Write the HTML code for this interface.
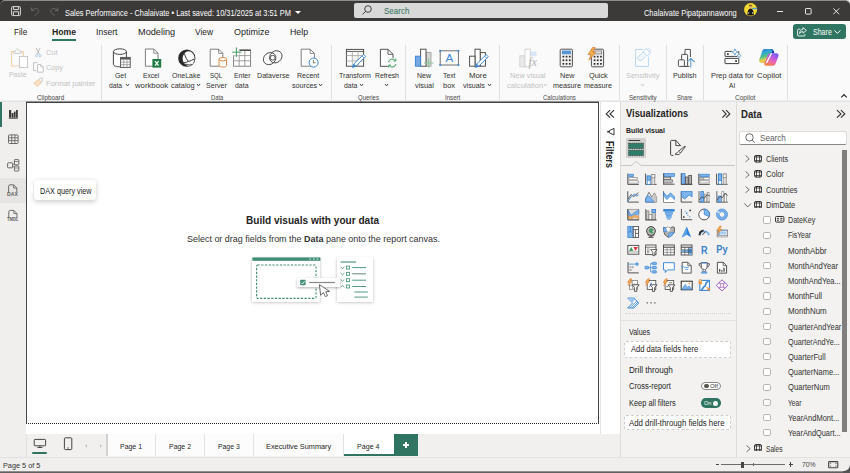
<!DOCTYPE html>
<html><head><meta charset="utf-8"><title>Sales Performance</title>
<style>
*{box-sizing:border-box;margin:0;padding:0}
html,body{width:850px;height:473px;overflow:hidden;background:#f3f2f1;font-family:"Liberation Sans",sans-serif;color:#252423}
.a{position:absolute}
.t{position:absolute;white-space:nowrap;transform-origin:0 50%;display:block}
svg{position:absolute;overflow:visible}

</style></head><body>
<div class="a" style="left:0px;top:0px;width:850px;height:21px;background:#e9e9e9;"></div>
<div class="a" style="left:0px;top:0px;width:12px;height:12px;background:#262626;"></div>
<div class="a" style="left:0px;top:0px;width:850px;height:20.9px;background:#3b3a39;border-radius:5px 5px 0 0;border-top:1px solid #8e8e8e"></div>
<div class="a" style="left:0px;top:20.9px;width:850px;height:79.6px;background:#fafafa;"></div>
<div class="a" style="left:0px;top:100.2px;width:850px;height:1.8px;background:linear-gradient(#f4f4f4,#dcdcdc);"></div>
<div class="a" style="left:0px;top:102px;width:26px;height:355px;background:#f0efee;"></div>
<div class="a" style="left:26px;top:102px;width:594px;height:332px;background:#fff;"></div>
<div class="a" style="left:26px;top:101px;width:573px;height:1.2px;background:#949494;"></div>
<div class="a" style="left:26px;top:101.8px;width:573px;height:322.2px;background:#fff;border:1px solid #454545;border-bottom:1px dotted #222"></div>
<div class="a" style="left:599.5px;top:102px;width:1px;height:332px;background:#e4e3e2;"></div>
<div class="a" style="left:25.5px;top:434px;width:594.5px;height:23px;background:#f1f0ef;border-left:1px solid #e2e1e0"></div>
<div class="a" style="left:620px;top:102px;width:116px;height:355px;background:#f3f2f1;border-left:1px solid #dddcdb"></div>
<div class="a" style="left:736px;top:102px;width:114px;height:355px;background:#f3f2f1;border-left:1px solid #dddcdb"></div>
<div class="a" style="left:0px;top:456.5px;width:850px;height:14.5px;background:#f0efee;border-top:1px solid #e3e2e1"></div>
<div class="a" style="left:0px;top:470.6px;width:850px;height:2.4px;background:linear-gradient(#a5a5a5,#4a4a4a);"></div>
<div class="a" style="left:295.4px;top:10.6px;border-left:3.1px solid transparent;border-right:3.1px solid transparent;border-top:3.4px solid #fff"></div>
<div class="a" style="left:354.2px;top:2.8px;width:254px;height:15.1px;background:#d9d9d9;border-radius:2px"></div>
<div class="a" style="left:51.6px;top:39.2px;width:24px;height:1.9px;background:#2f7562;"></div>
<div class="a" style="left:793px;top:24px;width:53px;height:15px;background:#2f7562;border-radius:3px"></div>
<div class="a" style="left:101.3px;top:45px;width:1px;height:54.8px;background:#e0e0e0;"></div>
<div class="a" style="left:331.1px;top:45px;width:1px;height:54.8px;background:#e0e0e0;"></div>
<div class="a" style="left:404.9px;top:45px;width:1px;height:54.8px;background:#e0e0e0;"></div>
<div class="a" style="left:499.1px;top:45px;width:1px;height:54.8px;background:#e0e0e0;"></div>
<div class="a" style="left:618.7px;top:45px;width:1px;height:54.8px;background:#e0e0e0;"></div>
<div class="a" style="left:665.8px;top:45px;width:1px;height:54.8px;background:#e0e0e0;"></div>
<div class="a" style="left:703.1px;top:45px;width:1px;height:54.8px;background:#e0e0e0;"></div>
<div class="a" style="left:786.9px;top:45px;width:1px;height:54.8px;background:#e0e0e0;"></div>
<svg style="left:125.85000000000001px;top:84.45px;" width="3.1" height="1.9" viewBox="0 0 3.1 1.9" fill="none"><path d="M0 0 L1.55 1.9 L3.1 0" stroke="#3b3a39" stroke-width="0.95"/></svg>
<svg style="left:197.04999999999998px;top:84.45px;" width="3.1" height="1.9" viewBox="0 0 3.1 1.9" fill="none"><path d="M0 0 L1.55 1.9 L3.1 0" stroke="#3b3a39" stroke-width="0.95"/></svg>
<svg style="left:319.05px;top:84.45px;" width="3.1" height="1.9" viewBox="0 0 3.1 1.9" fill="none"><path d="M0 0 L1.55 1.9 L3.1 0" stroke="#3b3a39" stroke-width="0.95"/></svg>
<svg style="left:360.45px;top:84.45px;" width="3.1" height="1.9" viewBox="0 0 3.1 1.9" fill="none"><path d="M0 0 L1.55 1.9 L3.1 0" stroke="#3b3a39" stroke-width="0.95"/></svg>
<svg style="left:385.15px;top:84.35px;" width="3.1" height="1.9" viewBox="0 0 3.1 1.9" fill="none"><path d="M0 0 L1.55 1.9 L3.1 0" stroke="#3b3a39" stroke-width="0.95"/></svg>
<svg style="left:487.84999999999997px;top:84.45px;" width="3.1" height="1.9" viewBox="0 0 3.1 1.9" fill="none"><path d="M0 0 L1.55 1.9 L3.1 0" stroke="#3b3a39" stroke-width="0.95"/></svg>
<svg style="left:544.25px;top:84.45px;" width="3.1" height="1.9" viewBox="0 0 3.1 1.9" fill="none"><path d="M0 0 L1.55 1.9 L3.1 0" stroke="#c3c3c3" stroke-width="0.95"/></svg>
<svg style="left:640.6500000000001px;top:84.35px;" width="3.1" height="1.9" viewBox="0 0 3.1 1.9" fill="none"><path d="M0 0 L1.55 1.9 L3.1 0" stroke="#c3c3c3" stroke-width="0.95"/></svg>
<svg style="left:841px;top:93.7px;" width="6" height="3.6" viewBox="0 0 6 3.6" fill="none"><path d="M0.3 3.3 L3 0.5 L5.7 3.3" stroke="#222" stroke-width="1.1"/></svg>
<div class="a" style="left:0px;top:101.8px;width:2px;height:25px;background:#2f7562;"></div>
<div class="a" style="left:0px;top:177.8px;width:25.5px;height:25.2px;background:#e6e5e4;"></div>
<div class="a" style="left:33.5px;top:180px;width:62.9px;height:20px;background:#fff;border-radius:3px;box-shadow:0 1.5px 5px rgba(0,0,0,.2)"></div>
<div class="a" style="left:28.1px;top:185.2px;border-top:4.7px solid transparent;border-bottom:4.7px solid transparent;border-right:5.6px solid #fff"></div>
<div class="a" style="left:107.4px;top:434px;width:286.6px;height:22.4px;background:#fcfcfc;"></div>
<div class="a" style="left:106.4px;top:434px;width:1.6px;height:22.4px;background:#d2d1d0;"></div>
<div class="a" style="left:155.1px;top:434px;width:1.2px;height:22.4px;background:#e3e2e1;"></div>
<div class="a" style="left:204.0px;top:434px;width:1.2px;height:22.4px;background:#e3e2e1;"></div>
<div class="a" style="left:253.0px;top:434px;width:1.2px;height:22.4px;background:#e3e2e1;"></div>
<div class="a" style="left:343.2px;top:434px;width:1.2px;height:22.4px;background:#e3e2e1;"></div>
<div class="a" style="left:344.2px;top:434px;width:49.6px;height:22.4px;background:#fff;"></div>
<div class="a" style="left:344.2px;top:454.3px;width:49.6px;height:2.1px;background:#2f7562;"></div>
<div class="a" style="left:394.1px;top:434.2px;width:24.1px;height:22.2px;background:#2f7562;"></div>
<div class="a" style="left:402.6px;top:444.4px;width:6.6px;height:1.5px;background:#fff;"></div>
<div class="a" style="left:405.15px;top:441.9px;width:1.5px;height:6.6px;background:#fff;"></div>
<div class="a" style="left:32.1px;top:451.9px;width:15.4px;height:2px;background:#2f7562;border-radius:1px"></div>
<div class="a" style="left:85.4px;top:443.6px;border-top:2.1px solid transparent;border-bottom:2.1px solid transparent;border-right:2.8px solid #c8c6c4"></div>
<div class="a" style="left:99.9px;top:443.6px;border-top:2.1px solid transparent;border-bottom:2.1px solid transparent;border-left:2.8px solid #c8c6c4"></div>
<div class="a" style="left:716.4px;top:464.1px;width:2.2px;height:0.9px;background:#444;"></div>
<div class="a" style="left:721px;top:464.1px;width:63.8px;height:0.8px;background:#6b6b6b;"></div>
<div class="a" style="left:740.8px;top:461.5px;width:2.8px;height:6.2px;background:#484644;"></div>
<div class="a" style="left:752.6px;top:463px;width:0.8px;height:3px;background:#6b6b6b;"></div>
<div class="a" style="left:788.6px;top:464.1px;width:4.4px;height:0.9px;background:#444;"></div>
<div class="a" style="left:790.35px;top:462.3px;width:0.9px;height:4.5px;background:#444;"></div>
<svg style="left:828.3px;top:461.2px;" width="10.4" height="7.4" viewBox="0 0 10.4 7.4" fill="none"><rect x="0.6" y="0.6" width="9.2" height="6.2" rx="0.8" stroke="#484644" stroke-width="1.1"/><path d="M2.2 3V2.2H3.2M7.2 2.2H8.2V3M8.2 4.4V5.2H7.2M3.2 5.2H2.2V4.4" stroke="#484644" stroke-width="0.7"/></svg>
<svg style="left:843px;top:464px" width="7" height="9" viewBox="0 0 7 9"><path d="M7 0V9H0V7C4 7 7 4.5 7 0Z" fill="#555"/></svg>
<span class="t" style="left:610.3px;top:141.1px;font-size:10.8px;line-height:10.8px;font-weight:bold;transform-origin:0 0;transform:rotate(90deg) translateY(-50%) scaleX(0.83);">Filters</span>
<div class="a" style="left:626.1px;top:138px;width:19.8px;height:19.5px;background:#d2d1d0;border-radius:1px"></div>
<div class="a" style="left:621px;top:164.6px;width:114px;height:1px;background:#c8c6c4;"></div>
<svg style="left:630.6px;top:160.9px" width="10.6" height="4.9" viewBox="0 0 10.6 4.9"><path d="M0 4.9 L5.3 0.5 L10.6 4.9" fill="#f3f2f1" stroke="#c8c6c4" stroke-width="0.9"/></svg>
<div class="a" style="left:624.5px;top:313.4px;width:106.8px;height:0px;background:transparent;border-top:1px dotted #d4d2d0"></div>
<div class="a" style="left:621px;top:320px;width:114.5px;height:1px;background:#e3e1df;"></div>
<div class="a" style="left:623.6px;top:340.7px;width:107.8px;height:17.1px;background:#fff;border:1px dashed #d0cecc;border-radius:2px"></div>
<div class="a" style="left:700.7px;top:381.6px;width:20.2px;height:8.9px;background:#fff;border:1px solid #8a8886;border-radius:4.5px"></div>
<div class="a" style="left:704.1px;top:383.8px;width:4.6px;height:4.6px;background:#55534f;border-radius:50%"></div>
<div class="a" style="left:700.7px;top:398.3px;width:20.2px;height:9.4px;background:#2f7562;border-radius:4.7px"></div>
<div class="a" style="left:712.8px;top:400.5px;width:5px;height:5px;background:#fff;border-radius:50%"></div>
<div class="a" style="left:623.6px;top:414.5px;width:107.8px;height:15.2px;background:#fff;border:1px dashed #d0cecc;border-radius:2px"></div>
<div class="a" style="left:739px;top:130.8px;width:108.2px;height:14px;background:#fff;border:1px solid #dcdbda;border-bottom:1px solid #8a8886;border-radius:2.5px"></div>
<svg style="left:745.4px;top:132.8px;" width="10.6" height="10.2" viewBox="0 0 10.6 10.2" fill="none"><circle cx="4.5" cy="4.4" r="3.7" stroke="#605e5c" stroke-width="0.9"/><path d="M7.2 7.2L9.8 9.6" stroke="#605e5c" stroke-width="0.9"/></svg>
<div class="a" style="left:842.2px;top:150.2px;width:5.2px;height:281.4px;background:#7f7e7d;"></div>
<svg style="left:745.4px;top:155.3px;" width="4.8" height="7.4" viewBox="0 0 4.8 7.4" fill="none"><path d="M0.5 0.5 L4.2 3.7 L0.5 6.9" stroke="#605e5c" stroke-width="0.9"/></svg>
<svg style="left:754px;top:155.2px;overflow:hidden;" width="8.1" height="7.6" viewBox="0 0 8.1 7.6" fill="none"><rect x="0.5" y="0.5" width="7.1" height="6.6" rx="1.5" stroke="#2b2a29" stroke-width="0.95"/><path d="M0.5 2H7.6M0.5 5.6H7.6M2.5 0.5V7.1M5.6 0.5V7.1" stroke="#2b2a29" stroke-width="0.8"/></svg>
<svg style="left:745.4px;top:170.5px;" width="4.8" height="7.4" viewBox="0 0 4.8 7.4" fill="none"><path d="M0.5 0.5 L4.2 3.7 L0.5 6.9" stroke="#605e5c" stroke-width="0.9"/></svg>
<svg style="left:754px;top:170.39999999999998px;overflow:hidden;" width="8.1" height="7.6" viewBox="0 0 8.1 7.6" fill="none"><rect x="0.5" y="0.5" width="7.1" height="6.6" rx="1.5" stroke="#2b2a29" stroke-width="0.95"/><path d="M0.5 2H7.6M0.5 5.6H7.6M2.5 0.5V7.1M5.6 0.5V7.1" stroke="#2b2a29" stroke-width="0.8"/></svg>
<svg style="left:745.4px;top:185.70000000000002px;" width="4.8" height="7.4" viewBox="0 0 4.8 7.4" fill="none"><path d="M0.5 0.5 L4.2 3.7 L0.5 6.9" stroke="#605e5c" stroke-width="0.9"/></svg>
<svg style="left:754px;top:185.6px;overflow:hidden;" width="8.1" height="7.6" viewBox="0 0 8.1 7.6" fill="none"><rect x="0.5" y="0.5" width="7.1" height="6.6" rx="1.5" stroke="#2b2a29" stroke-width="0.95"/><path d="M0.5 2H7.6M0.5 5.6H7.6M2.5 0.5V7.1M5.6 0.5V7.1" stroke="#2b2a29" stroke-width="0.8"/></svg>
<svg style="left:744.0px;top:202.6px;" width="7.4" height="4.6" viewBox="0 0 7.4 4.6" fill="none"><path d="M0.5 0.5 L3.7 4 L6.9 0.5" stroke="#605e5c" stroke-width="0.9"/></svg>
<svg style="left:754px;top:200.79999999999998px;overflow:hidden;" width="8.1" height="7.6" viewBox="0 0 8.1 7.6" fill="none"><rect x="0.5" y="0.5" width="7.1" height="6.6" rx="1.5" stroke="#2b2a29" stroke-width="0.95"/><path d="M0.5 2H7.6M0.5 5.6H7.6M2.5 0.5V7.1M5.6 0.5V7.1" stroke="#2b2a29" stroke-width="0.8"/></svg>
<div class="a" style="left:763.4px;top:216.3px;width:7.4px;height:7.4px;background:#fff;border:1px solid #b6b4b2;border-radius:1.8px"></div>
<div class="a" style="left:763.4px;top:231.5px;width:7.4px;height:7.4px;background:#fff;border:1px solid #b6b4b2;border-radius:1.8px"></div>
<div class="a" style="left:763.4px;top:246.7px;width:7.4px;height:7.4px;background:#fff;border:1px solid #b6b4b2;border-radius:1.8px"></div>
<div class="a" style="left:763.4px;top:261.9px;width:7.4px;height:7.4px;background:#fff;border:1px solid #b6b4b2;border-radius:1.8px"></div>
<div class="a" style="left:763.4px;top:277.1px;width:7.4px;height:7.4px;background:#fff;border:1px solid #b6b4b2;border-radius:1.8px"></div>
<div class="a" style="left:763.4px;top:292.3px;width:7.4px;height:7.4px;background:#fff;border:1px solid #b6b4b2;border-radius:1.8px"></div>
<div class="a" style="left:763.4px;top:307.5px;width:7.4px;height:7.4px;background:#fff;border:1px solid #b6b4b2;border-radius:1.8px"></div>
<div class="a" style="left:763.4px;top:322.7px;width:7.4px;height:7.4px;background:#fff;border:1px solid #b6b4b2;border-radius:1.8px"></div>
<div class="a" style="left:763.4px;top:337.9px;width:7.4px;height:7.4px;background:#fff;border:1px solid #b6b4b2;border-radius:1.8px"></div>
<div class="a" style="left:763.4px;top:353.1px;width:7.4px;height:7.4px;background:#fff;border:1px solid #b6b4b2;border-radius:1.8px"></div>
<div class="a" style="left:763.4px;top:368.3px;width:7.4px;height:7.4px;background:#fff;border:1px solid #b6b4b2;border-radius:1.8px"></div>
<div class="a" style="left:763.4px;top:383.5px;width:7.4px;height:7.4px;background:#fff;border:1px solid #b6b4b2;border-radius:1.8px"></div>
<div class="a" style="left:763.4px;top:398.7px;width:7.4px;height:7.4px;background:#fff;border:1px solid #b6b4b2;border-radius:1.8px"></div>
<div class="a" style="left:763.4px;top:413.9px;width:7.4px;height:7.4px;background:#fff;border:1px solid #b6b4b2;border-radius:1.8px"></div>
<div class="a" style="left:763.4px;top:429.1px;width:7.4px;height:7.4px;background:#fff;border:1px solid #b6b4b2;border-radius:1.8px"></div>
<svg style="left:775.2px;top:216.3px;" width="9.4" height="6.6" viewBox="0 0 9.4 6.6" fill="none"><rect x="0.5" y="0.5" width="8.4" height="5.6" rx="1" stroke="#252423" stroke-width="0.95"/><path d="M1.9 2.4H4M1.9 4.2H4M5.2 2.4H7.4M5.2 4.2H7.4" stroke="#252423" stroke-width="0.9"/></svg>
<svg style="left:746px;top:444.6px;" width="4.8" height="7.4" viewBox="0 0 4.8 7.4" fill="none"><path d="M0.5 0.5 L4.2 3.7 L0.5 6.9" stroke="#605e5c" stroke-width="0.9"/></svg>
<svg style="left:754px;top:444.3px;overflow:hidden;" width="8.1" height="7.0" viewBox="0 0 8.1 7.0" fill="none"><rect x="0.5" y="0.5" width="7.1" height="6.6" rx="1.5" stroke="#2b2a29" stroke-width="0.95"/><path d="M0.5 2H7.6M0.5 5.6H7.6M2.5 0.5V7.1M5.6 0.5V7.1" stroke="#2b2a29" stroke-width="0.8"/></svg>
<svg style="left:10.7px;top:5.8px;" width="10" height="10.2" viewBox="0 0 10 10.2" fill="none"><path d="M0.6 1.6a1 1 0 0 1 1-1H8.4a1 1 0 0 1 1 1V8.6a1 1 0 0 1-1 1H1.6a1 1 0 0 1-1-1Z" stroke="#dcdcdc" stroke-width="1"/><path d="M2.6 0.8V3.6H7.4V0.8M2.4 9.4V5.8H7.6V9.4" stroke="#dcdcdc" stroke-width="1"/></svg>
<svg style="left:30.5px;top:7px;" width="8.4" height="9.2" viewBox="0 0 8.4 9.2" fill="none"><path d="M0.6 0.6V3.6H3.6" stroke="#6e6d6c" stroke-width="0.9"/><path d="M0.8 3.4C3 1 6.4 0.8 7.5 3.2C8.4 5.4 5.6 7.2 3.6 9" stroke="#6e6d6c" stroke-width="0.9"/></svg>
<svg style="left:50.2px;top:7px;" width="8.4" height="9.2" viewBox="0 0 8.4 9.2" fill="none"><path d="M7.8 0.6V3.6H4.8" stroke="#6e6d6c" stroke-width="0.9"/><path d="M7.6 3.4C5.4 1 2 0.8 0.9 3.2C0 5.4 2.8 7.2 4.8 9" stroke="#6e6d6c" stroke-width="0.9"/></svg>
<svg style="left:362px;top:5.4px;" width="10" height="10" viewBox="0 0 10 10" fill="none"><circle cx="6" cy="4" r="3.3" stroke="#3a3a3a" stroke-width="0.95"/><path d="M3.6 6.4L0.6 9.4" stroke="#3a3a3a" stroke-width="0.95"/></svg>
<svg style="left:743.7px;top:2.8px;" width="13.2" height="13.2" viewBox="0 0 13.2 13.2" fill="none"><defs><clipPath id="avc"><circle cx="6.6" cy="6.6" r="6.55"/></clipPath></defs><circle cx="6.6" cy="6.6" r="6.55" fill="#f4d92f"/><g clip-path="url(#avc)"><path d="M4.8 2.9C4.8 1.5 8.2 1.5 8.2 2.9L7.8 3.6H5.2Z" fill="#6b4a1f"/><rect x="5.5" y="2.4" width="2" height="3.6" rx="0.9" fill="#d9a47e"/><path d="M3.4 12.6C3.4 7.4 4.6 5.8 6.5 5.8S9.8 7.4 9.8 12.6Z" fill="#17171a"/><rect x="8.3" y="4.8" width="4.6" height="1.5" fill="#4a9be8"/><rect x="3.8" y="9.4" width="1.4" height="1.2" fill="#e8d9c8"/><rect x="8" y="9.4" width="1.4" height="1.2" fill="#e8d9c8"/></g></svg>
<div class="a" style="left:777px;top:11px;width:6.4px;height:0.9px;background:#e8e8e8;"></div>
<svg style="left:804.7px;top:8.2px;" width="6.6" height="6.6" viewBox="0 0 6.6 6.6" fill="none"><rect x="0.5" y="0.5" width="5.6" height="5.6" rx="0.6" stroke="#f0f0f0" stroke-width="0.95"/></svg>
<svg style="left:832.6px;top:8.2px;" width="6.6" height="6.6" viewBox="0 0 6.6 6.6" fill="none"><path d="M0.4 0.4L6.2 6.2M6.2 0.4L0.4 6.2" stroke="#f0f0f0" stroke-width="0.95"/></svg>
<svg style="left:797px;top:26.6px;" width="10" height="9.6" viewBox="0 0 10 9.6" fill="none"><path d="M3.4 2.2H1.6a1 1 0 0 0-1 1V8a1 1 0 0 0 1 1H7a1 1 0 0 0 1-1V7.2" stroke="#fff" stroke-width="0.9"/><path d="M6 0.6L9.4 3.4L6 6.2V4.6C4.4 4.6 3.4 5.2 2.6 6.6C2.8 4 4 2.4 6 2.2Z" stroke="#fff" stroke-width="0.85" stroke-linejoin="round"/></svg>
<svg style="left:834.3px;top:29.6px;" width="6.8" height="4" viewBox="0 0 6.8 4" fill="none"><path d="M0.4 0.4L3.4 3.4L6.4 0.4" stroke="#fff" stroke-width="1"/></svg>
<div class="a" style="left:252.4px;top:257.4px;width:68px;height:44.6px;background:#fff;box-shadow:0 0.5px 3px rgba(0,0,0,.28)"></div>
<div class="a" style="left:336.7px;top:257px;width:36px;height:45px;background:#fff;box-shadow:0 0.5px 3px rgba(0,0,0,.28)"></div>
<svg style="left:0;top:0" width="850" height="473" viewBox="0 0 850 473" fill="none"><rect x="252.4" y="257.4" width="68" height="3.4" rx="0" stroke="none" fill="#3f8c76" stroke-width="1" /><rect x="309.4" y="258.5" width="1.6" height="1.2" rx="0" stroke="none" fill="#cfe5dd" stroke-width="1" /><rect x="313" y="258.5" width="1.6" height="1.2" rx="0" stroke="none" fill="#cfe5dd" stroke-width="1" /><rect x="316.6" y="258.5" width="1.6" height="1.2" rx="0" stroke="none" fill="#cfe5dd" stroke-width="1" /><rect x="256.6" y="265" width="59.4" height="33.4" rx="1" stroke="#3f8c76" fill="none" stroke-width="1.1" stroke-dasharray="2.2 1.5"/></svg>
<svg style="left:0;top:0" width="850" height="473" viewBox="0 0 850 473" fill="none"><path d="M340.6 262H356.1" stroke="#3f8c76" fill="none" stroke-width="1.1" /><path d="M340.6 266.8L342.5 268.6L344.4 266.8" stroke="#3f8c76" fill="none" stroke-width="0.8" /><rect x="346.4" y="266.1" width="3" height="3" rx="0" stroke="#3f8c76" fill="none" stroke-width="0.8" /><path d="M352.2 267.6H366" stroke="#3f8c76" fill="none" stroke-width="0.9" /><path d="M340.6 273.0L342.5 274.8L344.4 273.0" stroke="#3f8c76" fill="none" stroke-width="0.8" /><rect x="346.4" y="272.3" width="3" height="3" rx="0" stroke="#3f8c76" fill="none" stroke-width="0.8" /><path d="M352.2 273.8H366" stroke="#7d9a92" fill="none" stroke-width="1.2" /><path d="M340.6 279.4L342.5 281.2L344.4 279.4" stroke="#3f8c76" fill="none" stroke-width="0.8" /><rect x="346.4" y="278.7" width="3" height="3" rx="0" stroke="#3f8c76" fill="none" stroke-width="0.8" /><path d="M352.2 280.2H366" stroke="#3f8c76" fill="none" stroke-width="0.9" /><path d="M340.6 287.3L342.5 285.5L344.4 287.3" stroke="#3f8c76" fill="none" stroke-width="0.8" /><rect x="346.4" y="285.0" width="3" height="3" rx="0" stroke="#3f8c76" fill="none" stroke-width="0.8" /><path d="M352.2 286.5H366" stroke="#3f8c76" fill="none" stroke-width="0.9" /><path d="M354.4 292H367.8M354.4 297.1H367.8" stroke="#3f8c76" fill="none" stroke-width="0.9" /></svg>
<div class="a" style="left:296.8px;top:278.2px;width:43.2px;height:8.8px;background:#fff;box-shadow:0 0.5px 2.5px rgba(0,0,0,.3)"></div>
<svg style="left:0;top:0" width="850" height="473" viewBox="0 0 850 473" fill="none"><rect x="300.2" y="279.8" width="5.4" height="5.4" rx="0.6" stroke="none" fill="#3f8c76" stroke-width="1" /><path d="M301.4 282.8L302.6 284L304.6 281.2" stroke="#fff" fill="none" stroke-width="0.9" /><path d="M309.2 282.5H335" stroke="#8a8886" fill="none" stroke-width="1.2" /><path d="M319.4 284.6L320.6 295.2L323.4 292.6L325.4 296.6L327.6 295.6L325.6 291.8L329.6 291.4Z" stroke="#5a5958" fill="#fff" stroke-width="0.9" stroke-linejoin="round"/></svg>
<svg style="left:0;top:0" width="850" height="473" viewBox="0 0 850 473" fill="none"><g transform="translate(0 0)" ><path d="M14 51.6H11.6V66H19.2" stroke="#f3d2a6" fill="none" stroke-width="1.1" /><path d="M21 51.6H23.4V56" stroke="#f3d2a6" fill="none" stroke-width="1.1" /><path d="M13.8 53.4V51.2H15.6C15.8 49.6 16.6 48.9 17.5 48.9S19.2 49.6 19.4 51.2H21.2V53.4Z" stroke="#c6c6c6" fill="#fafafa" stroke-width="0.9" /><rect x="19.4" y="56.4" width="8.2" height="11.2" rx="0" stroke="#c2c2c2" fill="#fff" stroke-width="0.9" /></g>
<g transform="translate(0 0)" ><path d="M36.2 47.8L39.6 54.6M40.2 47.8L36.8 54.6" stroke="#b5b5b5" fill="none" stroke-width="0.9" /><circle cx="36.5" cy="55.6" r="1.1" stroke="#a9cdea" fill="none" stroke-width="0.9" /><circle cx="39.9" cy="55.6" r="1.1" stroke="#a9cdea" fill="none" stroke-width="0.9" /></g>
<g transform="translate(0 0)" ><path d="M37.4 62.6H33.5V70.6H36.4" stroke="#bdbdbd" fill="none" stroke-width="0.9" /><path d="M37.6 64.6H41L43.2 66.8V72.2H37.6Z" stroke="#bdbdbd" fill="#fff" stroke-width="0.9" /><path d="M40.8 64.8V67H43" stroke="#bdbdbd" fill="none" stroke-width="0.8" /></g>
<g transform="translate(0 0)" ><path d="M33.8 83.2L38.6 79.4L41.4 82.6L37.4 86.6Z" stroke="#f0c9a0" fill="#f8dfc4" stroke-width="0.9" /><path d="M38.8 79.4L40.8 77.8L42.8 80L41.2 82.2" stroke="#bdbdbd" fill="none" stroke-width="0.9" /><path d="M41.6 78.4L42.8 77.4" stroke="#bdbdbd" fill="none" stroke-width="0.9" /></g>
<g transform="translate(0 0)" ><path d="M113.4 51.6V64.2C113.4 65.8 116.4 66.8 119.9 66.8S126.4 65.8 126.4 64.2V51.6" stroke="#3b3a39" fill="#fcfcfc" stroke-width="0.95" /><ellipse cx="119.9" cy="51.6" rx="6.5" ry="2.8" stroke="#3b3a39" fill="#fcfcfc" stroke-width="0.95"/><rect x="120.6" y="57.4" width="9.6" height="10" rx="0" stroke="#4a4948" fill="#fff" stroke-width="0.9" /><rect x="120.6" y="57.4" width="9.6" height="2.2" rx="0" stroke="none" fill="#5a5958" stroke-width="1" /><path d="M120.6 62.1H130.2M120.6 64.7H130.2M123.8 59.6V67.4M127 59.6V67.4" stroke="#8a8886" fill="none" stroke-width="0.7" /></g>
<g transform="translate(0 0)" ><path d="M145.4 49H153.8L158.0 53.2V66.2H145.4Z" stroke="#7a7978" fill="#fff" stroke-width="0.95" /><path d="M153.8 49V53.2H158.0" stroke="#7a7978" fill="none" stroke-width="0.855" /><rect x="152.4" y="59" width="8.8" height="8.6" rx="0" stroke="none" fill="#1f7a45" stroke-width="1" /><path d="M155 61.2L158.6 65.6M158.6 61.2L155 65.6" stroke="#fff" fill="none" stroke-width="1.2" /></g>
<g transform="translate(0 0)" ><path fill-rule="evenodd" fill="#2b2a29" d="M178.2 58.2a8.6 8.6 0 1 0 17.2 0a8.6 8.6 0 1 0 -17.2 0ZM182.6 58.6a6 7.3 0 1 0 12 0a6 7.3 0 1 0 -12 0Z"/><path d="M184.4 53.4C185.4 57 186.6 59.6 188.4 61.4C190.6 61.2 192.4 59.4 194.6 59.2" stroke="#2b2a29" fill="none" stroke-width="0.9" /><path d="M181.4 62.8C184 63 186.4 62.4 188.4 61.4" stroke="#2b2a29" fill="none" stroke-width="0.9" /><path d="M182 64C185.4 63.4 188.6 65.8 192.4 64.6" stroke="#2b2a29" fill="none" stroke-width="0.8" /></g>
<g transform="translate(0 0)" ><path d="M210.2 49.2H218.6L222.79999999999998 53.400000000000006V66.2H210.2Z" stroke="#7a7978" fill="#fff" stroke-width="0.95" /><path d="M218.6 49.2V53.400000000000006H222.79999999999998" stroke="#7a7978" fill="none" stroke-width="0.855" /><path d="M219 59.4V65.4C219 66.4 220.6 67 222.8 67S226.6 66.4 226.6 65.4V59.4" stroke="#d8813a" fill="#fff" stroke-width="0.95" /><ellipse cx="222.8" cy="59.2" rx="3.8" ry="1.7" stroke="#d8813a" fill="#fff" stroke-width="0.95"/></g>
<g transform="translate(0 0)" ><rect x="233.6" y="50.2" width="17" height="16" rx="0" stroke="#7a7978" fill="#fff" stroke-width="0.9" /><path d="M236 50.2H250.6" stroke="#3b3a39" fill="none" stroke-width="1.3" /><path d="M233.6 55.6H250.6M233.6 60.8H250.6M239.2 51V66.2M244.8 51V66.2" stroke="#8a8886" fill="none" stroke-width="0.8" /><rect x="231.4" y="46.8" width="8" height="8.6" rx="0" stroke="none" fill="#f9f9f9" stroke-width="1" /><path d="M236.4 47.4V57M232.2 52.2H241.4" stroke="#3a9b5c" fill="none" stroke-width="0.95" /></g>
<g transform="translate(0 0)" ><ellipse cx="269.6" cy="58.6" rx="6.6" ry="5.7" transform="rotate(-40 269.6 58.6)" stroke="#4a4948" stroke-width="0.9"/><ellipse cx="275.8" cy="56.8" rx="6.6" ry="5.7" transform="rotate(-40 275.8 56.8)" stroke="#4a4948" stroke-width="0.9"/><circle cx="272.7" cy="57.7" r="2.4" stroke="#4a4948" fill="none" stroke-width="0.9" /></g>
<g transform="translate(0 0)" ><path d="M301.2 49.2H310.2L314.4 53.400000000000006V66.2H301.2Z" stroke="#7a7978" fill="#fff" stroke-width="0.95" /><path d="M310.2 49.2V53.400000000000006H314.4" stroke="#7a7978" fill="none" stroke-width="0.855" /><circle cx="313.6" cy="62.6" r="4.5" stroke="#3a86d4" fill="#fff" stroke-width="1" /><path d="M313.4 60V62.8H315.6" stroke="#605e5c" fill="none" stroke-width="0.85" /></g>
<g transform="translate(0 0)" ><rect x="346.4" y="49.4" width="17.2" height="16.8" rx="0" stroke="#4a4948" fill="#fff" stroke-width="0.95" /><path d="M346.4 51.4H363.6" stroke="#4a4948" fill="none" stroke-width="0.9" /><path d="M346.4 55.6H363.6M346.4 61H363.6M352.3 51.4V66.2M358 51.4V66.2" stroke="#a3a2a0" fill="none" stroke-width="0.8" /><path d="M355.78 66.34L353.66 64.22L363.54 54.34L365.66 56.46Z" stroke="#3a86d4" fill="#fff" stroke-width="0.95" stroke-linejoin="round"/><path d="M352.60 67.40L355.78 66.34L353.66 64.22Z" stroke="#3a86d4" fill="#3a86d4" stroke-width="0.95" stroke-linejoin="round"/><path d="M364.11 58.02L361.98 55.89" stroke="#3a86d4" fill="none" stroke-width="0.8" /></g>
<g transform="translate(0 0)" ><path d="M380.4 49.3H388.0L393.0 54.3V66.3H380.4Z" stroke="#4a4948" fill="#fff" stroke-width="0.95" /><path d="M388.0 49.3V54.3H393.0" stroke="#4a4948" fill="none" stroke-width="0.855" /><circle cx="392.2" cy="63.1" r="5.4" stroke="none" fill="#f9f9f9" stroke-width="1" /><path d="M388.4 62.2A4 4 0 0 1 395.4 60.6M396 64A4 4 0 0 1 389 65.6" stroke="#3a9b5c" fill="none" stroke-width="1" /><path d="M395.8 58.6V61H393.4M388.6 67.6V65.2H391" stroke="#3a9b5c" fill="none" stroke-width="0.9" /></g>
<g transform="translate(0 0)" ><rect x="426" y="52.6" width="5" height="13.6" rx="0" stroke="#a3a2a0" fill="#d6d5d4" stroke-width="0.9" /><rect x="420.6" y="49.2" width="5.4" height="17" rx="0" stroke="#4a4948" fill="#fff" stroke-width="0.95" /><rect x="415.4" y="56.2" width="5.2" height="10" rx="0" stroke="#3a86d4" fill="#74a9e2" stroke-width="0.95" /><path d="M428.6 58.4V67.6M424 63H433.4" stroke="#86c596" fill="none" stroke-width="1.1" /></g>
<g transform="translate(0 0)" ><rect x="440.2" y="50.8" width="18.2" height="14.2" rx="0" stroke="#6b6a69" fill="#fcfcfc" stroke-width="0.95" /><rect x="439.3" y="49.9" width="1.8" height="1.8" rx="0" stroke="none" fill="#3a86d4" stroke-width="1" /><rect x="457.5" y="49.9" width="1.8" height="1.8" rx="0" stroke="none" fill="#3a86d4" stroke-width="1" /><rect x="439.3" y="64.1" width="1.8" height="1.8" rx="0" stroke="none" fill="#3a86d4" stroke-width="1" /><rect x="457.5" y="64.1" width="1.8" height="1.8" rx="0" stroke="none" fill="#3a86d4" stroke-width="1" /><text x="449.3" y="61.7" font-size="11.6" fill="#3a86d4" text-anchor="middle" font-family="Liberation Sans, sans-serif">A</text></g>
<g transform="translate(0 0)" ><rect x="480.2" y="52.6" width="5.2" height="13.6" rx="0" stroke="#4a4948" fill="#fff" stroke-width="0.95" /><rect x="475" y="49.2" width="5.2" height="17" rx="0" stroke="#4a4948" fill="#fff" stroke-width="0.95" /><rect x="469.6" y="56.2" width="5.4" height="10" rx="0" stroke="#4a4948" fill="#fff" stroke-width="0.95" /><path d="M478.58 66.34L476.46 64.22L486.14 54.54L488.26 56.66Z" stroke="#3a86d4" fill="#fff" stroke-width="0.95" stroke-linejoin="round"/><path d="M475.40 67.40L478.58 66.34L476.46 64.22Z" stroke="#3a86d4" fill="#3a86d4" stroke-width="0.95" stroke-linejoin="round"/><path d="M486.71 58.22L484.58 56.09" stroke="#3a86d4" fill="none" stroke-width="0.8" /></g>
<g transform="translate(0 0)" ><rect x="530.4" y="52" width="5.6" height="3.2" rx="0" stroke="#c5ddf2" fill="#dbeaf7" stroke-width="0.7" /><rect x="519.8" y="55.8" width="5.2" height="11" rx="0" stroke="#d4d4d4" fill="#e9e9e9" stroke-width="0.9" /><rect x="525" y="49.2" width="5.2" height="17.6" rx="0" stroke="#d0d0d0" fill="#fdfdfd" stroke-width="0.9" /><text x="528.6" y="65.6" font-size="11.5" fill="#b3b3b3" font-style="italic" font-family="Liberation Serif, serif">fx</text></g>
<g transform="translate(0 0)" ><rect x="560.2" y="49.2" width="12.2" height="17.6" rx="1" stroke="#4a4948" fill="#f3f2f1" stroke-width="0.95" /><rect x="562.3000000000001" y="51.0" width="8.2" height="2.9" rx="0" stroke="#3a86d4" fill="#5b9bd5" stroke-width="0.7" /><rect x="562.5" y="55.800000000000004" width="1.7" height="1.7" rx="0" stroke="none" fill="#2b2a29" stroke-width="1" /><rect x="562.5" y="59.400000000000006" width="1.7" height="1.7" rx="0" stroke="none" fill="#2b2a29" stroke-width="1" /><rect x="562.5" y="63.00000000000001" width="1.7" height="1.7" rx="0" stroke="none" fill="#2b2a29" stroke-width="1" /><rect x="565.7" y="55.800000000000004" width="1.7" height="1.7" rx="0" stroke="none" fill="#2b2a29" stroke-width="1" /><rect x="565.7" y="59.400000000000006" width="1.7" height="1.7" rx="0" stroke="none" fill="#2b2a29" stroke-width="1" /><rect x="565.7" y="63.00000000000001" width="1.7" height="1.7" rx="0" stroke="none" fill="#2b2a29" stroke-width="1" /><rect x="568.9" y="55.800000000000004" width="1.7" height="1.7" rx="0" stroke="none" fill="#2b2a29" stroke-width="1" /><rect x="568.9" y="59.400000000000006" width="1.7" height="1.7" rx="0" stroke="none" fill="#2b2a29" stroke-width="1" /><rect x="568.9" y="63.00000000000001" width="1.7" height="1.7" rx="0" stroke="none" fill="#2b2a29" stroke-width="1" /></g>
<g transform="translate(0 0)" ><rect x="591.4" y="49.2" width="12.2" height="17.6" rx="1" stroke="#4a4948" fill="#f3f2f1" stroke-width="0.95" /><rect x="593.5" y="51.0" width="8.2" height="2.9" rx="0" stroke="#6b6a69" fill="#e6e5e4" stroke-width="0.7" /><rect x="593.6999999999999" y="55.800000000000004" width="1.7" height="1.7" rx="0" stroke="none" fill="#2b2a29" stroke-width="1" /><rect x="593.6999999999999" y="59.400000000000006" width="1.7" height="1.7" rx="0" stroke="none" fill="#2b2a29" stroke-width="1" /><rect x="593.6999999999999" y="63.00000000000001" width="1.7" height="1.7" rx="0" stroke="none" fill="#2b2a29" stroke-width="1" /><rect x="596.9" y="55.800000000000004" width="1.7" height="1.7" rx="0" stroke="none" fill="#2b2a29" stroke-width="1" /><rect x="596.9" y="59.400000000000006" width="1.7" height="1.7" rx="0" stroke="none" fill="#2b2a29" stroke-width="1" /><rect x="596.9" y="63.00000000000001" width="1.7" height="1.7" rx="0" stroke="none" fill="#2b2a29" stroke-width="1" /><rect x="600.0999999999999" y="55.800000000000004" width="1.7" height="1.7" rx="0" stroke="none" fill="#2b2a29" stroke-width="1" /><rect x="600.0999999999999" y="59.400000000000006" width="1.7" height="1.7" rx="0" stroke="none" fill="#2b2a29" stroke-width="1" /><rect x="600.0999999999999" y="63.00000000000001" width="1.7" height="1.7" rx="0" stroke="none" fill="#2b2a29" stroke-width="1" /><path d="M592.6 47.6L588 54.6H591L589 60.2L595.8 52.2H592.6L595.2 47.6Z" stroke="#d8813a" fill="#f5b04a" stroke-width="0.8" stroke-linejoin="round"/></g>
<g transform="translate(0 0)" ><path d="M643 49.4H635.6V66.4H648.4V56.6" stroke="#b4d3ee" fill="#fdfdfd" stroke-width="0.95" /><g transform="rotate(-42 644 54.6)"><rect x="636.6" y="52.4" width="9" height="4.6" rx="1.6" stroke="#b4d3ee" fill="#fff" stroke-width="0.9" /><path d="M638.4 53.6V55.8M640 53.6V55.8M641.6 53.6V55.8M643.2 53.6V55.8" stroke="#b4d3ee" fill="none" stroke-width="0.6" /><rect x="645.4" y="51.6" width="4.4" height="6.2" rx="0.8" stroke="#b4d3ee" fill="#fff" stroke-width="0.9" /><rect x="649.8" y="53" width="2" height="3.4" rx="0.4" stroke="#b4d3ee" fill="#fff" stroke-width="0.9" /></g></g>
<g transform="translate(0 0)" ><path d="M685 49.4H690.4V57M685 66.4V49.4" stroke="#4a4948" fill="none" stroke-width="0.95" /><path d="M685 49.4a0 0 0 0 1 0 0" stroke="none" fill="none" stroke-width="1" /><rect x="681.6" y="54.4" width="6" height="12" rx="0.8" stroke="#4a4948" fill="#f9f9f9" stroke-width="0.95" /><rect x="678.4" y="59.8" width="6" height="6.6" rx="0.8" stroke="#4a4948" fill="#f9f9f9" stroke-width="0.95" /><path d="M685 66.4H689.4" stroke="#4a4948" fill="none" stroke-width="0.95" /><path d="M690.8 67.6V58.6M687.2 62L690.8 58.4L694.6 62" stroke="#5b9bd5" fill="none" stroke-width="1.05" /></g>
<g transform="translate(0 0)" ><rect x="725" y="51.4" width="13.8" height="5" rx="0.4" stroke="#2b2a29" fill="#fff" stroke-width="0.9" /><rect x="725" y="58.4" width="13.8" height="5.2" rx="0.4" stroke="#2b2a29" fill="#fff" stroke-width="0.9" /><rect x="727" y="53.2" width="1.7" height="1.7" rx="0" stroke="none" fill="#2b2a29" stroke-width="1" /><rect x="735.2" y="60.2" width="1.7" height="1.7" rx="0" stroke="none" fill="#2b2a29" stroke-width="1" /><path d="M734.9 47.6L738.4 52L734.9 56.4L731.4 52Z" stroke="none" fill="#f9f9f9" stroke-width="1" /><path d="M734.9 48.8C735.3 50.6 736.2 51.6 737.9 52C736.2 52.4 735.3 53.4 734.9 55.2C734.5 53.4 733.6 52.4 731.9 52C733.6 51.6 734.5 50.6 734.9 48.8Z" stroke="#5b9bd5" fill="#f9f9f9" stroke-width="0.85" stroke-linejoin="round"/><path d="M739.1 52.8L741.6 55.7L739.1 58.6L736.6 55.7Z" stroke="none" fill="#f9f9f9" stroke-width="1" /><path d="M739.1 53.6C739.4 54.8 740 55.4 741.1 55.7C740 56 739.4 56.6 739.1 57.8C738.8 56.6 738.2 56 737.1 55.7C738.2 55.4 738.8 54.8 739.1 53.6Z" stroke="#5b9bd5" fill="#f9f9f9" stroke-width="0.8" stroke-linejoin="round"/></g>
<defs><linearGradient id="cpa" x1="0" y1="0" x2="0.25" y2="1"><stop offset="0" stop-color="#2b6fe0"/><stop offset="0.3" stop-color="#2fa5d8"/><stop offset="0.6" stop-color="#58c08a"/><stop offset="0.85" stop-color="#e9d54a"/><stop offset="1" stop-color="#f2b23a"/></linearGradient><linearGradient id="cpb" x1="0.7" y1="0" x2="0.2" y2="1"><stop offset="0" stop-color="#7b5cf0"/><stop offset="0.35" stop-color="#c35be0"/><stop offset="0.65" stop-color="#ee6a9e"/><stop offset="1" stop-color="#f08a3c"/></linearGradient></defs>
<g transform="translate(0 0)" ><path d="M765 49.1H770.8C772.6 49.1 773.4 50.2 772.8 51.8L769 61.2C768.4 62.4 767.6 62.8 766.4 62.8H761.4C759.6 62.8 758.6 61.6 759.2 59.8L762.2 51.2C762.8 49.6 763.6 49.1 765 49.1Z" stroke="none" fill="url(#cpa)" stroke-width="1" /><path d="M770.6 49.1C772.8 49.1 774 50.4 774.4 53.2H771.2L772.6 50.4Z" stroke="none" fill="#1c3fb8" stroke-width="1" /><path d="M771.6 53.2H776.2C778 53.2 779 54.4 778.4 56.2L775.6 63.6C775 65.2 774.2 65.7 772.8 65.7H766.2C764.6 65.7 763.8 64.6 764.4 63.2L768 54.8C768.6 53.6 769.6 53.2 771.6 53.2Z" stroke="none" fill="url(#cpb)" stroke-width="1" /><path d="M771.3 53.6L766.6 62.6" stroke="#fbfbfb" fill="none" stroke-width="1.3" stroke-linecap="round"/></g>
<g transform="translate(0 0)" ><path d="M8.8 118.2H17.8" stroke="#3b3a39" fill="none" stroke-width="1" /><rect x="9" y="110" width="2.2" height="7.6" rx="0" stroke="none" fill="#3b3a39" stroke-width="1" /><rect x="11.6" y="113" width="1.9" height="4.6" rx="0" stroke="none" fill="#3b3a39" stroke-width="1" /><rect x="13.9" y="111.6" width="1.7" height="6" rx="0" stroke="none" fill="#3b3a39" stroke-width="1" /><rect x="16" y="110" width="1.8" height="7.6" rx="0" stroke="none" fill="#3b3a39" stroke-width="1" /></g>
<g transform="translate(0 0)" ><rect x="8.5" y="134.9" width="9.6" height="8.6" rx="1" stroke="#605e5c" fill="none" stroke-width="0.9" /><path d="M8.5 137.8H18.1M8.5 140.6H18.1M11.7 134.9V143.5M14.9 134.9V143.5" stroke="#605e5c" fill="none" stroke-width="0.8" /></g>
<g transform="translate(0 0)" ><rect x="7.6" y="162.8" width="5" height="5" rx="0.6" stroke="#605e5c" fill="none" stroke-width="0.9" /><rect x="14.4" y="159.6" width="4.4" height="5.2" rx="0.6" stroke="#605e5c" fill="none" stroke-width="0.9" /><rect x="14.4" y="166" width="4.4" height="5" rx="0.6" stroke="#605e5c" fill="none" stroke-width="0.9" /><path d="M14.4 161.6H18.8M14.4 168H18.8M12.6 164.4H14.4M12.6 166.6H14.4" stroke="#605e5c" fill="none" stroke-width="0.7" /></g>
<g transform="translate(0 0)" ><path d="M8.6 192.4V186.20000000000002C8.6 185.4 9.2 184.8 10.0 184.8H13.6L16.799999999999997 188.0V192.4" stroke="#605e5c" fill="none" stroke-width="0.9" /><path d="M13.6 184.8V188.0H16.799999999999997" stroke="#605e5c" fill="none" stroke-width="0.8" /></g>
<g transform="translate(0 0)" ><path d="M8.8 218.0V211.8C8.8 211.0 9.4 210.4 10.200000000000001 210.4H13.8L17.0 213.6V218.0" stroke="#605e5c" fill="none" stroke-width="0.9" /><path d="M13.8 210.4V213.6H17.0" stroke="#605e5c" fill="none" stroke-width="0.8" /></g>
<g transform="translate(627.2 173)" ><path d="M0.6 0.6V11.4H11.6" stroke="#4a4948" fill="none" stroke-width="0.95" /><rect x="1.6" y="1.2" width="4.6" height="2.4" rx="0" stroke="#3a86d4" fill="#7db2ea" stroke-width="0.7" /><rect x="1.6" y="4.5" width="8.4" height="2.3" rx="0" stroke="#8a8886" fill="#fff" stroke-width="0.7" /><rect x="1.6" y="7.8" width="9.4" height="2.3" rx="0" stroke="#8a8886" fill="#fff" stroke-width="0.7" /></g>
<g transform="translate(645 173)" ><path d="M0.6 0.6V11.4H11.6" stroke="#4a4948" fill="none" stroke-width="0.95" /><rect x="2.2" y="3" width="3" height="8.4" rx="0" stroke="#3a86d4" fill="#fff" stroke-width="0.8" /><rect x="2.2" y="3" width="3" height="4.2" rx="0" stroke="#3a86d4" fill="#7db2ea" stroke-width="0.8" /><rect x="6.8" y="1.4" width="3" height="10" rx="0" stroke="#8a8886" fill="#e1e0df" stroke-width="0.8" /><rect x="6.8" y="1.4" width="3" height="3.4" rx="0" stroke="#8a8886" fill="#fff" stroke-width="0.8" /></g>
<g transform="translate(662.9 173)" ><rect x="0.8" y="0.6" width="10.8" height="2.8" rx="0" stroke="#3a86d4" fill="#7db2ea" stroke-width="0.7" /><path d="M0.8 0.4V11.6" stroke="#4a4948" fill="none" stroke-width="0.95" /><rect x="0.8" y="4.2" width="7" height="2" rx="0" stroke="#4a4948" fill="#fff" stroke-width="0.75" /><rect x="0.8" y="7" width="8.6" height="2" rx="0" stroke="#4a4948" fill="#fff" stroke-width="0.75" /><path d="M0.4 11.2H11.6" stroke="#4a4948" fill="none" stroke-width="0.95" /><path d="M0.8 10H9.4" stroke="#8a8886" fill="none" stroke-width="0.8" /></g>
<g transform="translate(680.6 173)" ><rect x="1" y="0.6" width="3.4" height="10.6" rx="0" stroke="#3a86d4" fill="#7db2ea" stroke-width="0.8" /><rect x="5" y="4" width="2.6" height="7.2" rx="0" stroke="#4a4948" fill="#b3b2b1" stroke-width="0.8" /><rect x="8.2" y="2.4" width="2.8" height="8.8" rx="0" stroke="#4a4948" fill="#b3b2b1" stroke-width="0.8" /><path d="M0.3 11.4H11.8" stroke="#4a4948" fill="none" stroke-width="0.95" /><path d="M0.6 0.4V11.4" stroke="#4a4948" fill="none" stroke-width="0.8" /></g>
<g transform="translate(698.2 173)" ><path d="M0.6 0.6V11.4H11.6" stroke="#4a4948" fill="none" stroke-width="0.95" /><rect x="1.6" y="1.2" width="9.4" height="2.4" rx="0" stroke="#3a86d4" fill="#7db2ea" stroke-width="0.7" /><rect x="1.6" y="4.6" width="9.4" height="2.2" rx="0" stroke="#8a8886" fill="#fff" stroke-width="0.7" /><rect x="1.6" y="7.8" width="9.4" height="2.2" rx="0" stroke="#8a8886" fill="#fff" stroke-width="0.7" /><rect x="1.6" y="4.6" width="4" height="2.2" rx="0" stroke="#8a8886" fill="#d0cfce" stroke-width="0.7" /></g>
<g transform="translate(716 173)" ><path d="M0.6 0.6V11.4H11.6" stroke="#4a4948" fill="none" stroke-width="0.95" /><rect x="2.4" y="1" width="3" height="10.2" rx="0" stroke="#3a86d4" fill="#fff" stroke-width="0.8" /><rect x="2.4" y="1" width="3" height="6.4" rx="0" stroke="#3a86d4" fill="#7db2ea" stroke-width="0.8" /><rect x="7.2" y="1" width="3" height="10.2" rx="0" stroke="#8a8886" fill="#e1e0df" stroke-width="0.8" /><rect x="7.2" y="1" width="3" height="3.6" rx="0" stroke="#8a8886" fill="#fff" stroke-width="0.8" /></g>
<g transform="translate(627.2 190.7)" ><path d="M0.6 0.6V11.4H11.6" stroke="#4a4948" fill="none" stroke-width="0.95" /><path d="M0.8 8.4L4 3.8L6.6 6L11.2 1.8" stroke="#4a4948" fill="none" stroke-width="0.9" /><path d="M0.8 10.4L4.4 5.6L7.6 3.2L9.2 5.4L11.6 4" stroke="#3a86d4" fill="none" stroke-width="0.9" /></g>
<g transform="translate(645 190.7)" ><path d="M0.6 11.4V8.2L4 1.6L6.8 6.6L9.4 2.2L11.6 6.8V11.4Z" stroke="#4a4948" fill="#fff" stroke-width="0.75" stroke-linejoin="round"/><path d="M9.4 2.2L11.6 6.8V11.4H8.6L6.8 6.6Z" stroke="none" fill="#c8c7c6" stroke-width="1" /><path d="M0.6 11.4V8.2L2.6 4.6L5.4 6.2L9 11.4Z" stroke="#3a86d4" fill="#7db2ea" stroke-width="0.7" stroke-linejoin="round"/></g>
<g transform="translate(662.9 190.7)" ><path d="M0.6 0.6V11.4H11.6" stroke="#4a4948" fill="none" stroke-width="0.95" /><path d="M0.8 1.8L4 5.6L7.6 2.2L11.6 6.2V9L7.6 5.8L4 9.4L0.8 5.8Z" stroke="#3a86d4" fill="#7db2ea" stroke-width="0.8" /><path d="M0.8 5.8L4 9.4L7.6 5.8L11.6 9V11.2H0.8Z" stroke="none" fill="#fff" stroke-width="1" /></g>
<g transform="translate(680.6 190.7)" ><path d="M0.6 0.6V11.4H11.6" stroke="#4a4948" fill="none" stroke-width="0.95" /><path d="M0.9 0.8H11.5V6.2L8.6 4.2L4.2 8.4L0.9 6Z" stroke="#3a86d4" fill="#7db2ea" stroke-width="0.8" /></g>
<g transform="translate(698.2 190.7)" ><path d="M0.4 11.4H11.8" stroke="#4a4948" fill="none" stroke-width="0.95" /><path d="M0.8 0.4V11.4" stroke="#4a4948" fill="none" stroke-width="0.8" /><rect x="2.6" y="0.8" width="2.6" height="10.4" rx="0" stroke="#3a86d4" fill="#7db2ea" stroke-width="0.8" /><rect x="6.2" y="3.4" width="1.8" height="7.8" rx="0" stroke="#8a8886" fill="#fff" stroke-width="0.7" /><rect x="9" y="1.6" width="1.8" height="9.6" rx="0" stroke="#8a8886" fill="#fff" stroke-width="0.7" /><path d="M0.8 9.4L3.6 6.2L6 7.6L8.8 4L11.6 5.4" stroke="#4a4948" fill="none" stroke-width="0.85" /></g>
<g transform="translate(716 190.7)" ><path d="M0.4 11.4H11.8" stroke="#4a4948" fill="none" stroke-width="0.95" /><path d="M0.8 0.4V11.4" stroke="#4a4948" fill="none" stroke-width="0.8" /><rect x="2" y="5.4" width="3.4" height="5.8" rx="0" stroke="#3a86d4" fill="#7db2ea" stroke-width="0.8" /><rect x="5.8" y="1" width="2" height="10.2" rx="0" stroke="#8a8886" fill="#fff" stroke-width="0.7" /><rect x="8.6" y="3" width="2" height="8.2" rx="0" stroke="#8a8886" fill="#fff" stroke-width="0.7" /><path d="M0.8 9.6L4 5.8L6.4 7L9 2.8L11.6 4.6" stroke="#4a4948" fill="none" stroke-width="0.85" /></g>
<g transform="translate(627.2 208.5)" ><rect x="0.6" y="0.8" width="11" height="10.6" rx="0" stroke="#8a8886" fill="#dddcdb" stroke-width="0.7" /><path d="M0.6 1.4L4 6.8L7.2 4L11.6 1.6V5L7.2 7.6L4 10.2L0.6 5Z" stroke="#3a86d4" fill="#7db2ea" stroke-width="0.7" /><path d="M0.6 7L4 8.6L7.4 6.4L11.6 8.4V10L7.4 8.4L4 10.4L0.6 9Z" stroke="#e8923a" fill="#f3b063" stroke-width="0.6" /><path d="M0.6 0.6V11.4H11.8" stroke="#4a4948" fill="none" stroke-width="0.9" /></g>
<g transform="translate(645 208.5)" ><rect x="1" y="2.4" width="3" height="9" rx="0" stroke="#8a8886" fill="#c8c7c6" stroke-width="0.8" /><rect x="4" y="6" width="3" height="5.4" rx="0" stroke="#8a8886" fill="#fff" stroke-width="0.8" /><rect x="7" y="1" width="3.6" height="10.4" rx="0" stroke="#8a8886" fill="#c8c7c6" stroke-width="0.8" /><rect x="7" y="1" width="3.6" height="3" rx="0" stroke="#3a86d4" fill="#7db2ea" stroke-width="0.8" /><path d="M0.4 11.4H11.6" stroke="#4a4948" fill="none" stroke-width="0.95" /><path d="M0.8 0.6V11.4" stroke="#4a4948" fill="none" stroke-width="0.8" /></g>
<g transform="translate(662.9 208.5)" ><path d="M0.4 0.8H11.6V2.4C11.6 3.2 10.8 3.6 10 3.6V5.6C10 6.2 9.4 6.6 8.8 6.6V8.8C8.8 9.4 8.2 9.8 7.6 9.8H4.4C3.8 9.8 3.2 9.4 3.2 8.8V6.6C2.6 6.6 2 6.2 2 5.6V3.6C1.2 3.6 0.4 3.2 0.4 2.4Z" stroke="none" fill="#7db2ea" stroke-width="1" /><path d="M0.4 0.6H11.6V2.6H0.4Z" stroke="none" fill="#3a86d4" stroke-width="1" /><path d="M2 3.8H10M3.2 6.8H8.8" stroke="#4f95dd" fill="none" stroke-width="0.7" /><rect x="4.2" y="9.6" width="3.6" height="1.6" rx="0" stroke="none" fill="#7db2ea" stroke-width="1" /></g>
<g transform="translate(680.6 208.5)" ><path d="M0.8 0.4V11.2H11.6" stroke="#4a4948" fill="none" stroke-width="0.95" /><rect x="2.4" y="7.8" width="1.5" height="1.5" rx="0" stroke="none" fill="#2b2a29" stroke-width="1" /><rect x="8.8" y="1.2" width="1.5" height="1.5" rx="0" stroke="none" fill="#2b2a29" stroke-width="1" /><rect x="5.4" y="4" width="1.4" height="1.4" rx="0" stroke="none" fill="#3a86d4" stroke-width="1" /><rect x="3.8" y="2.4" width="1.2" height="1.2" rx="0" stroke="none" fill="#7db2ea" stroke-width="1" /><rect x="8.4" y="7.6" width="1.4" height="1.4" rx="0" stroke="none" fill="#7db2ea" stroke-width="1" /><rect x="6.6" y="6.2" width="1.2" height="1.2" rx="0" stroke="none" fill="#7db2ea" stroke-width="1" /></g>
<g transform="translate(698.2 208.5)" ><circle cx="6" cy="6" r="5.4" stroke="#4a4948" fill="#fff" stroke-width="0.95" /><path d="M6 6V0.6A5.4 5.4 0 0 1 11 8Z" stroke="#3a86d4" fill="#7db2ea" stroke-width="0.8" /></g>
<g transform="translate(716 208.5)" ><circle cx="6" cy="6" r="4.2" stroke="#7db2ea" fill="none" stroke-width="2.6" /><circle cx="6" cy="6" r="5.5" stroke="#3a86d4" fill="none" stroke-width="0.7" /><circle cx="6" cy="6" r="2.9" stroke="#3a86d4" fill="none" stroke-width="0.7" /><path d="M1.4 3L3.6 4.6" stroke="#f3f2f1" fill="none" stroke-width="1.2" /></g>
<g transform="translate(627.2 226)" ><rect x="0.6" y="0.6" width="5.4" height="10.8" rx="0" stroke="#3a86d4" fill="#7db2ea" stroke-width="0.8" /><path d="M0.6 6H6M3.2 0.6V6" stroke="#3a86d4" fill="none" stroke-width="0.8" /><rect x="6" y="0.6" width="5.4" height="10.8" rx="0" stroke="#4a4948" fill="#fff" stroke-width="0.85" /><path d="M6 3.6H11.4M8.2 3.6V11.4M8.2 7.4H11.4" stroke="#4a4948" fill="none" stroke-width="0.8" /></g>
<g transform="translate(645 226)" ><circle cx="6" cy="5" r="4.4" stroke="#4a4948" fill="#b3b2b1" stroke-width="1" /><path d="M4.4 3.2C5.6 2 7.6 2.4 8.4 3.4L7.2 4.8L8.6 6.4L7 7.6L5.6 6.2L4 6.4Z" stroke="none" fill="#3a9b5c" stroke-width="1" /><path d="M7.4 5.2L8.8 5.4L8.4 6.8Z" stroke="none" fill="#fff" stroke-width="1" /><path d="M2.2 8.6A5 5 0 0 0 9.8 8.6" stroke="#4a4948" fill="none" stroke-width="0.8" /><path d="M6 9.6V11M3.4 11.4H8.6" stroke="#4a4948" fill="none" stroke-width="0.9" /></g>
<g transform="translate(662.9 226)" ><path d="M0.8 1.2L3.2 2.2L5 1L7.4 2.2L9.4 0.8L11.6 1.4L11.4 6.6L8.6 9.8L5.4 11.4L2.2 9L0.8 5.4Z" stroke="#4a4948" fill="#b3b2b1" stroke-width="0.8" /><path d="M0.8 1.2L3.2 2.2L4.6 5.4L0.9 5.4Z" stroke="#3a86d4" fill="#7db2ea" stroke-width="0.6" /><path d="M6 7L11.4 6.2L8.6 9.8L5.4 11.4Z" stroke="#3a86d4" fill="#7db2ea" stroke-width="0.6" /><path d="M5 1L7.4 2.2L6.4 5.2L4.6 5.4L3.2 2.2Z" stroke="none" fill="#fff" stroke-width="1" /></g>
<g transform="translate(680.6 226)" ><path d="M6.2 0.4L10.6 11.4L6.2 8.4L1.2 11.6Z" stroke="none" fill="#2f7fd8" stroke-width="1" /><path d="M6.2 0.4L6.2 8.4L1.2 11.6Z" stroke="none" fill="#5aa3ea" stroke-width="1" /></g>
<g transform="translate(698.2 226)" ><path d="M1.4 9.2A4.8 4.8 0 0 1 10.8 9.2" stroke="#7db2ea" fill="none" stroke-width="1.9" /><path d="M1.4 9.2A4.8 4.8 0 0 1 5.4 4.4" stroke="#2b2a29" fill="none" stroke-width="1.9" /><path d="M4.2 9L7.4 5.6" stroke="#2b2a29" fill="none" stroke-width="0.9" /></g>
<g transform="translate(716 226)" ><rect x="1.2" y="4" width="10.4" height="6.6" rx="0" stroke="#8a8886" fill="#7db2ea" stroke-width="0.8" /><rect x="1.2" y="9.4" width="10.4" height="1.6" rx="0" stroke="#8a8886" fill="#e8e7e6" stroke-width="0.6" /><text x="3.4" y="9" font-size="4.6" font-weight="bold" fill="#fff" font-family="Liberation Sans, sans-serif">123</text><path d="M3.6 0.2L0.8 4.6H2.8L1.4 8.6L5.8 3.2H3.6L5.4 0.2Z" stroke="#d8813a" fill="#f5a94a" stroke-width="0.6" stroke-linejoin="round"/></g>
<g transform="translate(627.2 244)" ><rect x="0.6" y="1.4" width="11" height="8.8" rx="0" stroke="#4a4948" fill="#f8f8f8" stroke-width="0.9" /><path d="M0.6 8H11.6" stroke="#8a8886" fill="none" stroke-width="0.7" /><path d="M1.8 7L4 3L6.2 7Z" stroke="none" fill="#3a9b5c" stroke-width="1" /><path d="M6.2 3H10.6L8.4 7Z" stroke="none" fill="#d8323a" stroke-width="1" /></g>
<g transform="translate(645 244)" ><rect x="0.6" y="1" width="10.4" height="9.6" rx="0" stroke="#4a4948" fill="#fff" stroke-width="0.9" /><path d="M0.6 3.2H11" stroke="#4a4948" fill="none" stroke-width="0.8" /><rect x="2.4" y="4.8" width="1.6" height="1.6" rx="0" stroke="#8a8886" fill="none" stroke-width="0.6" /><rect x="2.4" y="7.4" width="1.6" height="1.6" rx="0" stroke="#8a8886" fill="none" stroke-width="0.6" /><path d="M5.6 5.6H12L9.8 8.2V11.6H7.8V8.2Z" stroke="#4a4948" fill="#fff" stroke-width="0.85" stroke-linejoin="round"/></g>
<g transform="translate(662.9 244)" ><rect x="0.6" y="1" width="10.8" height="10" rx="0" stroke="#4a4948" fill="#fff" stroke-width="0.95" /><path d="M0.6 3.2H11.4" stroke="#4a4948" fill="none" stroke-width="1.1" /><path d="M0.6 5.8H11.4M0.6 8.4H11.4M4.2 3.2V11M7.8 3.2V11" stroke="#7a7978" fill="none" stroke-width="0.7" /></g>
<g transform="translate(680.6 244)" ><rect x="0.6" y="1" width="10.8" height="10" rx="0" stroke="#4a4948" fill="#fff" stroke-width="0.95" /><rect x="7.8" y="3.4" width="3.4" height="7.4" rx="0" stroke="none" fill="#7db2ea" stroke-width="1" /><rect x="0.8" y="5.8" width="10.4" height="2.6" rx="0" stroke="none" fill="#7db2ea" stroke-width="1" /><rect x="7.8" y="5.8" width="3.4" height="2.6" rx="0" stroke="none" fill="#3a86d4" stroke-width="1" /><path d="M0.6 3.2H11.4" stroke="#4a4948" fill="none" stroke-width="1.1" /><path d="M0.6 5.8H11.4M0.6 8.4H11.4M4.2 3.2V11M7.8 3.2V11" stroke="#4a4948" fill="none" stroke-width="0.6" /></g>
<g transform="translate(698.2 244)" ><text x="6" y="9.9" font-size="11" font-weight="bold" fill="#3b80c6" text-anchor="middle" font-family="Liberation Sans, sans-serif" textLength="6.6" lengthAdjust="spacingAndGlyphs">R</text></g>
<g transform="translate(716 244)" ><text x="6" y="9.4" font-size="11" font-weight="bold" fill="#3b80c6" text-anchor="middle" font-family="Liberation Sans, sans-serif" textLength="11.4" lengthAdjust="spacingAndGlyphs">Py</text></g>
<g transform="translate(627.2 261.7)" ><path d="M0.8 0.4V11.2H11.6" stroke="#4a4948" fill="none" stroke-width="0.95" /><path d="M0.8 2.4H8.4" stroke="#3a86d4" fill="none" stroke-width="0.8" /><circle cx="9.8" cy="2.4" r="1.3" stroke="#3a86d4" fill="#7db2ea" stroke-width="0.7" /><path d="M0.8 5.4H6.2" stroke="#8a8886" fill="none" stroke-width="0.8" /><path d="M5 4.4L6.4 5.4L5 6.4" stroke="#8a8886" fill="none" stroke-width="0.6" /><path d="M0.8 8.2H4" stroke="#8a8886" fill="none" stroke-width="0.8" /><path d="M3 7.2L4.4 8.2L3 9.2" stroke="#8a8886" fill="none" stroke-width="0.6" /></g>
<g transform="translate(645 261.7)" ><rect x="0" y="4.6" width="3.6" height="2.6" rx="0.5" stroke="#3a86d4" fill="#7db2ea" stroke-width="0.7" /><path d="M3.6 6H5.6M5.6 1.8V10.2M5.6 1.8H7.4M5.6 6H7.4M5.6 10.2H7.4" stroke="#3a86d4" fill="none" stroke-width="0.7" /><rect x="7.4" y="0.6" width="4" height="2.4" rx="0.5" stroke="#3a86d4" fill="#7db2ea" stroke-width="0.7" /><rect x="7.4" y="4.8" width="4" height="2.4" rx="0.5" stroke="#3a86d4" fill="#7db2ea" stroke-width="0.7" /><rect x="7.4" y="9" width="4" height="2.4" rx="0.5" stroke="#3a86d4" fill="#7db2ea" stroke-width="0.7" /></g>
<g transform="translate(662.9 261.7)" ><path d="M0.6 1H11.4V8.2H4.6L2.4 10.8V8.2H0.6Z" stroke="#3a86d4" fill="#fff" stroke-width="0.95" stroke-linejoin="round"/></g>
<g transform="translate(680.6 261.7)" ><path d="M1.6 0.6H7.2L10.6 4V11.4H1.6Z" stroke="#4a4948" fill="#fff" stroke-width="0.9" /><path d="M7.2 0.6V4H10.6" stroke="#4a4948" fill="none" stroke-width="0.8" /><path d="M3.6 5.6H8.2M4.4 7.6H7.6" stroke="#3a86d4" fill="none" stroke-width="0.8" /><circle cx="1.8" cy="5" r="0.9" stroke="#3a86d4" fill="#7db2ea" stroke-width="0.5" /></g>
<g transform="translate(698.2 261.7)" ><path d="M3 0.8H9V4.6C9 6.6 7.8 8 6 8S3 6.6 3 4.6Z" stroke="#4a4948" fill="#fff" stroke-width="0.95" /><path d="M3 2H0.8C0.8 4 1.6 5.2 3.2 5.4M9 2H11.2C11.2 4 10.4 5.2 8.8 5.4" stroke="#4a4948" fill="none" stroke-width="0.85" /><path d="M3.4 0.9H8.6V2.2H3.4Z" stroke="none" fill="#7db2ea" stroke-width="1" /><path d="M5 8L4.6 10H7.4L7 8" stroke="#4a4948" fill="#fff" stroke-width="0.7" /><rect x="3.2" y="10" width="5.6" height="1.6" rx="0.6" stroke="#3a86d4" fill="#7db2ea" stroke-width="0.6" /></g>
<g transform="translate(716 261.7)" ><path d="M1.4 0.6H7.2L10.6 4V11.4H1.4Z" stroke="#4a4948" fill="#fff" stroke-width="0.95" /><path d="M7.2 0.6V4H10.6" stroke="#4a4948" fill="none" stroke-width="0.8" /><rect x="3" y="7.4" width="1.3" height="2.6" rx="0" stroke="none" fill="#4a4948" stroke-width="1" /><rect x="5.2" y="8.4" width="1.3" height="1.6" rx="0" stroke="none" fill="#4a4948" stroke-width="1" /><rect x="7.4" y="6" width="1.3" height="4" rx="0" stroke="none" fill="#4a4948" stroke-width="1" /></g>
<g transform="translate(627.2 279.4)" ><rect x="2.2" y="1.2" width="8" height="8.6" rx="0" stroke="#8a8886" fill="#e8e7e6" stroke-width="0.8" /><rect x="5" y="1.2" width="5.2" height="3.6" rx="0" stroke="#8a8886" fill="#fff" stroke-width="0.7" /><rect x="2.2" y="6.4" width="3.2" height="3.4" rx="0" stroke="#8a8886" fill="#fff" stroke-width="0.7" /><path d="M5 5.4H12L9.6 8.2V12.0H7.4V8.2Z" stroke="#4a4948" fill="#fff" stroke-width="0.9" stroke-linejoin="round"/><path d="M2.8000000000000003 -0.6L0.2 3.1999999999999997H2.0L0.8 6.4L4.8 2.0H3.0L4.6000000000000005 -0.6Z" stroke="#d8813a" fill="#f5a94a" stroke-width="0.55" stroke-linejoin="round"/></g>
<g transform="translate(645 279.4)" ><rect x="2.2" y="1.2" width="8.6" height="9" rx="0" stroke="#4a4948" fill="#fff" stroke-width="0.8" /><path d="M4.4 8L6.2 3.2L7 5" stroke="#3a86d4" fill="none" stroke-width="0.7" /><path d="M5 5.4H12L9.6 8.2V12.0H7.4V8.2Z" stroke="#4a4948" fill="#fff" stroke-width="0.9" stroke-linejoin="round"/><path d="M2.8000000000000003 -0.6L0.2 3.1999999999999997H2.0L0.8 6.4L4.8 2.0H3.0L4.6000000000000005 -0.6Z" stroke="#d8813a" fill="#f5a94a" stroke-width="0.55" stroke-linejoin="round"/></g>
<g transform="translate(662.9 279.4)" ><rect x="2.2" y="1.2" width="8.6" height="9" rx="0" stroke="#4a4948" fill="#fff" stroke-width="0.8" /><path d="M6 3.4H9.4" stroke="#4a4948" fill="none" stroke-width="0.7" /><rect x="3.6" y="6.6" width="1.2" height="1.2" rx="0" stroke="none" fill="#4a4948" stroke-width="1" /><path d="M5 5.4H12L9.6 8.2V12.0H7.4V8.2Z" stroke="#4a4948" fill="#fff" stroke-width="0.9" stroke-linejoin="round"/><path d="M2.8000000000000003 -0.6L0.2 3.1999999999999997H2.0L0.8 6.4L4.8 2.0H3.0L4.6000000000000005 -0.6Z" stroke="#d8813a" fill="#f5a94a" stroke-width="0.55" stroke-linejoin="round"/></g>
<g transform="translate(680.6 279.4)" ><rect x="0.6" y="1.8" width="11" height="8.6" rx="0" stroke="#2b2a29" fill="#fff" stroke-width="1" /><path d="M1.2 9.8L4.6 5L7 8L8.6 6.4L11 9.8Z" stroke="#3a86d4" fill="#7db2ea" stroke-width="0.6" /><circle cx="8.8" cy="4" r="0.8" stroke="none" fill="#e8923a" stroke-width="1" /></g>
<g transform="translate(698.2 279.4)" ><rect x="1.6" y="1" width="9.6" height="10" rx="0" stroke="#3a86d4" fill="#fff" stroke-width="1.1" /><path d="M3.4 10.6L5.4 7.6L7 6.6L8 3.4L10.2 1.6" stroke="#3a86d4" fill="none" stroke-width="1.6" /><rect x="0.4" y="0" width="3.2" height="4.8" rx="0.6" stroke="none" fill="#e8923a" stroke-width="1" /><rect x="1.2" y="1" width="1.4" height="1" rx="0" stroke="none" fill="#fff" stroke-width="1" /><circle cx="10.4" cy="9.8" r="1.4" stroke="none" fill="#e8923a" stroke-width="1" /><circle cx="8.8" cy="8" r="0.7" stroke="none" fill="#e8923a" stroke-width="1" /></g>
<g transform="translate(716 279.4)" ><path d="M6 0.4L11.8 6L6 11.6L0.2 6Z" stroke="#9b4fb8" fill="#fff" stroke-width="0.9" stroke-linejoin="round"/><path d="M3 3.2C5 5 5 7 3 8.8M9 3.2C7 5 7 7 9 8.8M3.2 3C5 4.8 7 4.8 8.8 3M3.2 9C5 7.2 7 7.2 8.8 9" stroke="#9b4fb8" fill="none" stroke-width="0.8" /></g>
<g transform="translate(627.2 297)" ><path d="M0.5 1H6.6L11.6 6L6.6 11H0.5L5.4 6Z" stroke="#3a86d4" fill="#fff" stroke-width="0.95" stroke-linejoin="round"/><path d="M2.6 11L9.8 3.8M5 11L10.8 5" stroke="#3a86d4" fill="none" stroke-width="0.9" /><path d="M0.5 1H6.6L8 2.4L4 6.6L5.4 6Z" stroke="none" fill="#9cc4ee" stroke-width="1" /></g>
<g transform="translate(0 0)" ><rect x="646.6" y="302.2" width="1.3" height="1.3" rx="0" stroke="none" fill="#605e5c" stroke-width="1" /><rect x="650.4" y="302.2" width="1.3" height="1.3" rx="0" stroke="none" fill="#605e5c" stroke-width="1" /><rect x="654.2" y="302.2" width="1.3" height="1.3" rx="0" stroke="none" fill="#605e5c" stroke-width="1" /></g>
<g transform="translate(0 0)" ><path d="M628.5 140.5H640.2" stroke="#3b3a39" fill="none" stroke-width="1" /><rect x="628.6" y="143.2" width="14.8" height="5.4" rx="0" stroke="#3b3a39" fill="#2f7d68" stroke-width="0.9" stroke-dasharray="1 0.8"/><rect x="628.6" y="150.2" width="14.8" height="5.4" rx="0" stroke="#3b3a39" fill="#2f7d68" stroke-width="0.9" stroke-dasharray="1 0.8"/></g>
<g transform="translate(0 0)" ><path d="M680.6 146V145.6L675.8 140.4H671.6C671 140.4 670.6 140.8 670.6 141.4V154.4C670.6 155 671 155.4 671.6 155.4H673.4" stroke="#3b3a39" fill="none" stroke-width="0.95" /><path d="M675.8 140.4V145.6H680.6" stroke="#3b3a39" fill="none" stroke-width="0.9" /><path d="M685 146L678.6 151.2C677 152.4 676.8 153.6 675 154.2C677.4 155.2 679.4 154.6 680.4 153.2L685.4 146.6Z" stroke="#3b3a39" fill="#f3f2f1" stroke-width="0.9" stroke-linejoin="round"/><path d="M678.8 151.2L680.4 153" stroke="#3b3a39" fill="none" stroke-width="0.7" /></g>
<g transform="translate(0 0)" ><path d="M610.1 110.2L606.2 113.9L610.1 117.60000000000001" stroke="#323130" fill="none" stroke-width="1.15" /><path d="M614.0 110.2L610.1 113.9L614.0 117.60000000000001" stroke="#323130" fill="none" stroke-width="1.15" /></g>
<g transform="translate(0 0)" ><path d="M722.4 110.2L726.1 113.9L722.4 117.60000000000001" stroke="#323130" fill="none" stroke-width="1.15" /><path d="M726.1 110.2L729.8000000000001 113.9L726.1 117.60000000000001" stroke="#323130" fill="none" stroke-width="1.15" /></g>
<g transform="translate(0 0)" ><path d="M837 110.2L840.9 113.9L837 117.60000000000001" stroke="#323130" fill="none" stroke-width="1.15" /><path d="M840.9 110.2L844.8 113.9L840.9 117.60000000000001" stroke="#323130" fill="none" stroke-width="1.15" /></g>
<g transform="translate(0 0)" ><path d="M614 128.4V135L609.4 132.8V130.6Z" stroke="#323130" fill="none" stroke-width="0.95" stroke-linejoin="round"/><path d="M609.4 131.7H607.2" stroke="#323130" fill="none" stroke-width="1.6" /></g>
<g transform="translate(0 0)" ><rect x="34.2" y="439.4" width="11.4" height="6.4" rx="0.8" stroke="#3b3a39" fill="none" stroke-width="0.95" /><path d="M39.9 445.8V447.4M37.4 447.5H42.4" stroke="#3b3a39" fill="none" stroke-width="0.9" /></g>
<g transform="translate(0 0)" ><rect x="64.4" y="437.8" width="7.4" height="11.8" rx="1" stroke="#3b3a39" fill="none" stroke-width="0.95" /><path d="M67.4 448H68.8" stroke="#3b3a39" fill="none" stroke-width="0.9" /></g></svg>
<span class="t" style="left:64.8px;top:7.9px;font-size:8.4px;line-height:11.76px;color:#fff;transform:scaleX(0.8833);">Sales Performance - Chalaivate • Last saved: 10/31/2025 at 3:51 PM</span>
<span class="t" style="left:383.7px;top:4.9px;font-size:9px;line-height:12.6px;color:#2f6e5c;transform:scaleX(0.8903);">Search</span>
<span class="t" style="left:644.2px;top:7.9px;font-size:8.4px;line-height:11.76px;color:#fff;transform:scaleX(0.8887);">Chalaivate Pipatpannawong</span>
<span class="t" style="left:14.3px;top:25.9px;font-size:9px;line-height:12.6px;transform:scaleX(0.9094);">File</span>
<span class="t" style="left:51.6px;top:25.9px;font-size:9px;line-height:12.6px;font-weight:bold;transform:scaleX(0.9634);">Home</span>
<span class="t" style="left:95.6px;top:25.9px;font-size:9px;line-height:12.6px;transform:scaleX(0.9505);">Insert</span>
<span class="t" style="left:137.8px;top:25.9px;font-size:9px;line-height:12.6px;transform:scaleX(1.0183);">Modeling</span>
<span class="t" style="left:195.4px;top:25.9px;font-size:9px;line-height:12.6px;transform:scaleX(0.9349);">View</span>
<span class="t" style="left:233.8px;top:25.9px;font-size:9px;line-height:12.6px;transform:scaleX(0.9967);">Optimize</span>
<span class="t" style="left:289.5px;top:25.9px;font-size:9px;line-height:12.6px;transform:scaleX(0.9776);">Help</span>
<span class="t" style="left:812.8px;top:25.8px;font-size:8.6px;line-height:12.04px;color:#fff;transform:scaleX(0.8196);">Share</span>
<span class="t" style="left:9.2px;top:69.4px;font-size:8px;line-height:11.2px;color:#c3c3c3;transform:scaleX(0.8550);">Paste</span>
<span class="t" style="left:46px;top:47.2px;font-size:8px;line-height:11.2px;color:#c3c3c3;transform:scaleX(0.9235);">Cut</span>
<span class="t" style="left:46px;top:62.4px;font-size:8px;line-height:11.2px;color:#c3c3c3;transform:scaleX(0.9097);">Copy</span>
<span class="t" style="left:46px;top:77.8px;font-size:8px;line-height:11.2px;color:#c3c3c3;transform:scaleX(0.9494);">Format painter</span>
<span class="t" style="left:37.1px;top:92.8px;font-size:6.7px;line-height:9.38px;color:#484644;transform:scaleX(0.9502);">Clipboard</span>
<span class="t" style="left:114.6px;top:69.6px;font-size:8px;line-height:11.2px;color:#323130;transform:scaleX(0.8600);">Get</span>
<span class="t" style="left:109.2px;top:79.6px;font-size:8px;line-height:11.2px;color:#323130;transform:scaleX(0.8409);">data</span>
<span class="t" style="left:143px;top:69.6px;font-size:8px;line-height:11.2px;color:#323130;transform:scaleX(0.8332);">Excel</span>
<span class="t" style="left:134.5px;top:79.6px;font-size:8px;line-height:11.2px;color:#323130;transform:scaleX(0.9693);">workbook</span>
<span class="t" style="left:172.4px;top:69.6px;font-size:8px;line-height:11.2px;color:#323130;transform:scaleX(0.8747);">OneLake</span>
<span class="t" style="left:171px;top:79.6px;font-size:8px;line-height:11.2px;color:#323130;transform:scaleX(0.9187);">catalog</span>
<span class="t" style="left:210.1px;top:69.6px;font-size:8px;line-height:11.2px;color:#323130;transform:scaleX(0.7618);">SQL</span>
<span class="t" style="left:206.1px;top:79.6px;font-size:8px;line-height:11.2px;color:#323130;transform:scaleX(0.8870);">Server</span>
<span class="t" style="left:233.8px;top:69.6px;font-size:8px;line-height:11.2px;color:#323130;transform:scaleX(0.8627);">Enter</span>
<span class="t" style="left:234.9px;top:79.6px;font-size:8px;line-height:11.2px;color:#323130;transform:scaleX(0.8666);">data</span>
<span class="t" style="left:256.6px;top:69.6px;font-size:8px;line-height:11.2px;color:#323130;transform:scaleX(0.8884);">Dataverse</span>
<span class="t" style="left:297.3px;top:69.6px;font-size:8px;line-height:11.2px;color:#323130;transform:scaleX(0.8754);">Recent</span>
<span class="t" style="left:291.9px;top:79.6px;font-size:8px;line-height:11.2px;color:#323130;transform:scaleX(0.8959);">sources</span>
<span class="t" style="left:210.8px;top:92.8px;font-size:6.7px;line-height:9.38px;color:#484644;transform:scaleX(0.8628);">Data</span>
<span class="t" style="left:339px;top:69.6px;font-size:8px;line-height:11.2px;color:#323130;transform:scaleX(0.8850);">Transform</span>
<span class="t" style="left:344px;top:79.6px;font-size:8px;line-height:11.2px;color:#323130;transform:scaleX(0.8602);">data</span>
<span class="t" style="left:374.7px;top:69.6px;font-size:8px;line-height:11.2px;color:#323130;transform:scaleX(0.8531);">Refresh</span>
<span class="t" style="left:358.3px;top:92.8px;font-size:6.7px;line-height:9.38px;color:#484644;transform:scaleX(0.8923);">Queries</span>
<span class="t" style="left:416.8px;top:69.6px;font-size:8px;line-height:11.2px;color:#323130;transform:scaleX(0.8866);">New</span>
<span class="t" style="left:414.5px;top:79.6px;font-size:8px;line-height:11.2px;color:#323130;transform:scaleX(0.9192);">visual</span>
<span class="t" style="left:443.2px;top:69.6px;font-size:8px;line-height:11.2px;color:#323130;transform:scaleX(0.8520);">Text</span>
<span class="t" style="left:443.2px;top:79.6px;font-size:8px;line-height:11.2px;color:#323130;transform:scaleX(0.9298);">box</span>
<span class="t" style="left:469.2px;top:69.6px;font-size:8px;line-height:11.2px;color:#323130;transform:scaleX(0.9762);">More</span>
<span class="t" style="left:463.4px;top:79.6px;font-size:8px;line-height:11.2px;color:#323130;transform:scaleX(0.8956);">visuals</span>
<span class="t" style="left:445.3px;top:92.8px;font-size:6.7px;line-height:9.38px;color:#484644;transform:scaleX(0.9143);">Insert</span>
<span class="t" style="left:510.2px;top:69.6px;font-size:8px;line-height:11.2px;color:#c3c3c3;transform:scaleX(0.9176);">New visual</span>
<span class="t" style="left:506.5px;top:79.6px;font-size:8px;line-height:11.2px;color:#c3c3c3;transform:scaleX(0.9600);">calculation</span>
<span class="t" style="left:559.6px;top:69.6px;font-size:8px;line-height:11.2px;color:#323130;transform:scaleX(0.8991);">New</span>
<span class="t" style="left:552.7px;top:79.6px;font-size:8px;line-height:11.2px;color:#323130;transform:scaleX(0.8996);">measure</span>
<span class="t" style="left:588.6px;top:69.6px;font-size:8px;line-height:11.2px;color:#323130;transform:scaleX(0.9192);">Quick</span>
<span class="t" style="left:584px;top:79.6px;font-size:8px;line-height:11.2px;color:#323130;transform:scaleX(0.8996);">measure</span>
<span class="t" style="left:542.8px;top:92.8px;font-size:6.7px;line-height:9.38px;color:#484644;transform:scaleX(0.9029);">Calculations</span>
<span class="t" style="left:625.7px;top:69.6px;font-size:8px;line-height:11.2px;color:#c3c3c3;transform:scaleX(0.9274);">Sensitivity</span>
<span class="t" style="left:628.5px;top:92.8px;font-size:6.7px;line-height:9.38px;color:#484644;transform:scaleX(0.9167);">Sensitivity</span>
<span class="t" style="left:672.9px;top:69.6px;font-size:8px;line-height:11.2px;color:#323130;transform:scaleX(0.8990);">Publish</span>
<span class="t" style="left:676.7px;top:92.8px;font-size:6.7px;line-height:9.38px;color:#484644;transform:scaleX(0.8567);">Share</span>
<span class="t" style="left:710.9px;top:69.6px;font-size:8px;line-height:11.2px;color:#323130;transform:scaleX(0.9211);">Prep data for</span>
<span class="t" style="left:728.6px;top:79.6px;font-size:8px;line-height:11.2px;color:#323130;transform:scaleX(0.8331);">AI</span>
<span class="t" style="left:756.5px;top:69.6px;font-size:8px;line-height:11.2px;color:#323130;transform:scaleX(0.9837);">Copilot</span>
<span class="t" style="left:735.4px;top:92.8px;font-size:6.7px;line-height:9.38px;color:#484644;transform:scaleX(0.9794);">Copilot</span>
<span class="t" style="left:246.4px;top:213.8px;font-size:10.4px;line-height:14.56px;font-weight:bold;transform:scaleX(0.9686);">Build visuals with your data</span>
<span class="t" style="left:186.8px;top:232.9px;font-size:9px;line-height:12.6px;color:#323130;transform:scaleX(0.9954);">Select or drag fields from the <b>Data</b> pane onto the report canvas.</span>
<span class="t" style="left:39.5px;top:185.65px;font-size:8.2px;line-height:11.48px;transform:scaleX(0.8858);">DAX query view</span>
<span class="t" style="left:7px;top:191.9px;font-size:4.6px;line-height:6.44px;font-weight:bold;color:#605e5c;transform:scaleX(1.1130);">DAX</span>
<span class="t" style="left:7.1px;top:217px;font-size:4.6px;line-height:6.44px;font-weight:bold;color:#605e5c;transform:scaleX(0.9009);">TMDL</span>
<span class="t" style="left:120.3px;top:440.8px;font-size:8.1px;line-height:11.34px;transform:scaleX(0.8575);">Page 1</span>
<span class="t" style="left:169.1px;top:440.8px;font-size:8.1px;line-height:11.34px;transform:scaleX(0.8575);">Page 2</span>
<span class="t" style="left:217.6px;top:440.8px;font-size:8.1px;line-height:11.34px;transform:scaleX(0.8458);">Page 3</span>
<span class="t" style="left:266px;top:440.8px;font-size:8.1px;line-height:11.34px;transform:scaleX(0.9059);">Executive Summary</span>
<span class="t" style="left:357.4px;top:440.8px;font-size:8.1px;line-height:11.34px;transform:scaleX(0.8770);">Page 4</span>
<span class="t" style="left:2.8px;top:460.9px;font-size:7.7px;line-height:10.78px;color:#323130;transform:scaleX(0.9484);">Page 5 of 5</span>
<span class="t" style="left:802.1px;top:460.1px;font-size:7.7px;line-height:10.78px;color:#484644;transform:scaleX(0.8837);">70%</span>
<span class="t" style="left:626.1px;top:107.4px;font-size:10.3px;line-height:14.42px;font-weight:bold;transform:scaleX(0.9068);">Visualizations</span>
<span class="t" style="left:626.1px;top:126px;font-size:7.7px;line-height:10.78px;font-weight:bold;transform:scaleX(0.9014);">Build visual</span>
<span class="t" style="left:628.7px;top:326.7px;font-size:8.3px;line-height:11.62px;transform:scaleX(0.8520);">Values</span>
<span class="t" style="left:630.7px;top:344.3px;font-size:8.3px;line-height:11.62px;transform:scaleX(0.9091);">Add data fields here</span>
<span class="t" style="left:628.6px;top:365px;font-size:8.3px;line-height:11.62px;transform:scaleX(0.9791);">Drill through</span>
<span class="t" style="left:628.6px;top:381px;font-size:8.3px;line-height:11.62px;transform:scaleX(0.9087);">Cross-report</span>
<span class="t" style="left:628.6px;top:397.9px;font-size:8.3px;line-height:11.62px;transform:scaleX(0.8940);">Keep all filters</span>
<span class="t" style="left:710px;top:382.2px;font-size:6px;line-height:8.4px;color:#323130;transform:scaleX(0.9866);">Off</span>
<span class="t" style="left:704.2px;top:399.2px;font-size:6.2px;line-height:8.68px;color:#fff;transform:scaleX(0.8832);">On</span>
<span class="t" style="left:629px;top:418px;font-size:8.3px;line-height:11.62px;transform:scaleX(0.9412);">Add drill-through fields here</span>
<span class="t" style="left:741.4px;top:107.5px;font-size:10.3px;line-height:14.42px;font-weight:bold;transform:scaleX(0.9271);">Data</span>
<span class="t" style="left:759.7px;top:131.8px;font-size:9px;line-height:12.6px;color:#605e5c;transform:scaleX(0.9078);">Search</span>
<span class="t" style="left:765.7px;top:154.2px;font-size:8.5px;line-height:11.9px;color:#323130;transform:scaleX(0.8505);">Clients</span>
<span class="t" style="left:765.7px;top:169.4px;font-size:8.5px;line-height:11.9px;color:#323130;transform:scaleX(0.8911);">Color</span>
<span class="t" style="left:765.7px;top:184.6px;font-size:8.5px;line-height:11.9px;color:#323130;transform:scaleX(0.8656);">Countries</span>
<span class="t" style="left:765.7px;top:199.8px;font-size:8.5px;line-height:11.9px;color:#323130;transform:scaleX(0.8862);">DimDate</span>
<span class="t" style="left:787.7px;top:215.1px;font-size:8.5px;line-height:11.9px;color:#323130;transform:scaleX(0.8372);">DateKey</span>
<span class="t" style="left:787.7px;top:230.3px;font-size:8.5px;line-height:11.9px;color:#323130;transform:scaleX(0.8066);">FisYear</span>
<span class="t" style="left:787.7px;top:245.5px;font-size:8.5px;line-height:11.9px;color:#323130;transform:scaleX(0.9304);">MonthAbbr</span>
<span class="t" style="left:787.7px;top:260.7px;font-size:8.5px;line-height:11.9px;color:#323130;transform:scaleX(0.8956);">MonthAndYear</span>
<span class="t" style="left:787.7px;top:275.9px;font-size:8.5px;line-height:11.9px;color:#323130;transform:scaleX(0.8756);">MonthAndYea...</span>
<span class="t" style="left:787.7px;top:291.1px;font-size:8.5px;line-height:11.9px;color:#323130;transform:scaleX(0.9135);">MonthFull</span>
<span class="t" style="left:787.7px;top:306.3px;font-size:8.5px;line-height:11.9px;color:#323130;transform:scaleX(0.9308);">MonthNum</span>
<span class="t" style="left:787.7px;top:321.5px;font-size:8.5px;line-height:11.9px;color:#323130;transform:scaleX(0.8720);">QuarterAndYear</span>
<span class="t" style="left:787.7px;top:336.7px;font-size:8.5px;line-height:11.9px;color:#323130;transform:scaleX(0.8556);">QuarterAndYe...</span>
<span class="t" style="left:787.7px;top:351.9px;font-size:8.5px;line-height:11.9px;color:#323130;transform:scaleX(0.8844);">QuarterFull</span>
<span class="t" style="left:787.7px;top:367.1px;font-size:8.5px;line-height:11.9px;color:#323130;transform:scaleX(0.8758);">QuarterName...</span>
<span class="t" style="left:787.7px;top:382.3px;font-size:8.5px;line-height:11.9px;color:#323130;transform:scaleX(0.8960);">QuarterNum</span>
<span class="t" style="left:787.7px;top:397.5px;font-size:8.5px;line-height:11.9px;color:#323130;transform:scaleX(0.7855);">Year</span>
<span class="t" style="left:787.7px;top:412.7px;font-size:8.5px;line-height:11.9px;color:#323130;transform:scaleX(0.8802);">YearAndMont...</span>
<span class="t" style="left:787.7px;top:427.9px;font-size:8.5px;line-height:11.9px;color:#323130;transform:scaleX(0.8672);">YearAndQuart...</span>
<span class="t" style="left:765.9px;top:443.5px;font-size:8.5px;line-height:11.9px;color:#323130;transform:scaleX(0.7759);">Sales</span>
</body></html>
